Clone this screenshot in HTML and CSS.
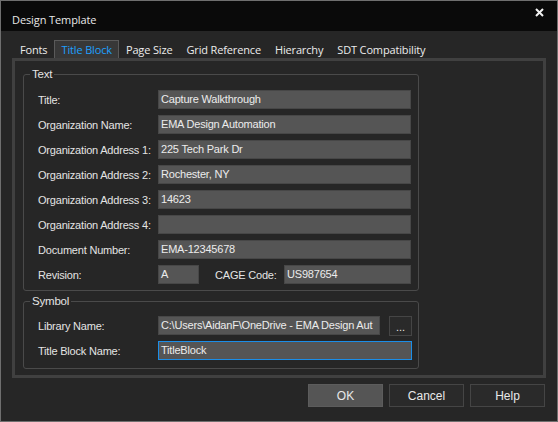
FILE: index.html
```html
<!DOCTYPE html>
<html>
  <head>
    <title>Design Template</title>
    <link rel="stylesheet" href="styles.css">
  </head>
  <body>
    <div class="window">
      <div class="titlebar">
        <span class="title">Design Template</span>
        <svg class="close" width="9" height="9" viewBox="0 0 9 9">
          <path d="M1 1 L8 8 M8 1 L1 8" stroke="#f2f2f2" stroke-width="2" />
        </svg>
      </div>

      <div class="tabs">
        <span class="tab">Fonts</span>
        <span class="tab active">Title Block</span>
        <span class="tab">Page Size</span>
        <span class="tab">Grid Reference</span>
        <span class="tab">Hierarchy</span>
        <span class="tab">SDT Compatibility</span>
      </div>

      <div class="tab-page">
        <fieldset class="group">
          <legend>Text</legend>
          <div class="form">
            <label>Title:</label>
            <div class="field">Capture Walkthrough</div>
            <label>Organization Name:</label>
            <div class="field">EMA Design Automation</div>
            <label>Organization Address 1:</label>
            <div class="field">225 Tech Park Dr</div>
            <label>Organization Address 2:</label>
            <div class="field">Rochester, NY</div>
            <label>Organization Address 3:</label>
            <div class="field">14623</div>
            <label>Organization Address 4:</label>
            <div class="field"></div>
            <label>Document Number:</label>
            <div class="field">EMA-12345678</div>
            <label>Revision:</label>
            <div class="field-row">
              <div class="field revision">A</div>
              <label class="cage-label">CAGE Code:</label>
              <div class="field cage">US987654</div>
            </div>
          </div>
        </fieldset>

        <fieldset class="group symbol">
          <legend>Symbol</legend>
          <div class="form">
            <label>Library Name:</label>
            <div class="field-row">
              <div class="field library">C:\Users\AidanF\OneDrive - EMA Design Aut</div>
              <button class="browse">...</button>
            </div>
            <label>Title Block Name:</label>
            <div class="field focused">TitleBlock</div>
          </div>
        </fieldset>
      </div>

      <div class="buttons">
        <button class="btn default">OK</button>
        <button class="btn">Cancel</button>
        <button class="btn">Help</button>
      </div>
    </div>
  </body>
</html>
```

FILE: styles.css
```css
body {
  margin: 0;
  background: #262626;
}
.window {
  width: 558px;
  height: 422px;
  box-sizing: border-box;
  border: 1px solid #6f6f6f;
  background: #262626;
  color: #e4e4e4;
  font-family: "Liberation Sans", Arial, sans-serif;
  font-size: 11px;
  letter-spacing: -0.2px;
}
.titlebar {
  height: 30px;
  background: #0a0a0a;
  display: flex;
  justify-content: space-between;
  align-items: flex-start;
  padding: 0 13px 0 11px;
}
.title {
  font-family: "Open Sans", sans-serif;
  font-size: 11px;
  letter-spacing: -0.1px;
  color: #e8e8e8;
  margin-top: 11px;
}
.close {
  margin-top: 7px;
}
.tabs {
  display: flex;
  margin: 9px 0 0 12px;
  height: 18px;
}
.tab {
  font-family: "Open Sans", sans-serif;
  font-size: 11px;
  letter-spacing: -0.15px;
  line-height: 17px;
  padding: 0 6px;
  border: 1px solid transparent;
  border-bottom: none;
  color: #ececec;
}
.tab.active {
  background: #383838;
  border-color: #5a5a5a;
  color: #1ea0ff;
}
.tab-page {
  margin-left: 11px;
  width: 534px;
  height: 320px;
  box-sizing: border-box;
  border: 3px solid #404040;
  padding: 6px 0 0 8px;
}
.group {
  width: 396px;
  box-sizing: border-box;
  margin: 0;
  padding: 0;
  border: 1px solid #4a4a4a;
  border-radius: 3px;
  min-width: 0;
}
.group.symbol {
  margin-top: 3px;
}
.group legend {
  margin-left: 6px;
  padding: 0 2px;
  line-height: 14px;
  font-size: 11.5px;
  color: #e4e4e4;
}
.form {
  display: grid;
  grid-template-columns: 120px 1fr;
  grid-auto-rows: 19px;
  row-gap: 6px;
  align-items: center;
  padding: 9px 7px 6px 14px;
}
.symbol .form {
  padding: 8px 7px 8px 14px;
}
.form label {
  font-size: 11px;
  white-space: nowrap;
}
.field {
  height: 19px;
  box-sizing: border-box;
  background: #555555;
  border: 1px solid #474747;
  padding: 0 2px;
  line-height: 17px;
  font-size: 11px;
  color: #ececec;
  white-space: nowrap;
  overflow: hidden;
}
.field.focused {
  border-color: #1b8ee8;
}
.field-row {
  display: flex;
  align-items: center;
  height: 19px;
}
.revision {
  width: 41px;
}
.cage-label {
  margin-left: 16px;
  width: 69px;
}
.cage {
  flex: 1;
}
.library {
  width: 222px;
}
.browse {
  margin-left: 9px;
  width: 23px;
  height: 20px;
  padding: 0;
  background: #2a2a2a;
  border: 1px solid #454545;
  color: #e4e4e4;
  font-family: "Liberation Sans", Arial, sans-serif;
  font-size: 11px;
  line-height: 20px;
}
.buttons {
  display: flex;
  justify-content: flex-end;
  gap: 6px;
  margin-top: 6px;
  padding-right: 12px;
}
.btn {
  width: 75px;
  height: 23px;
  padding: 0;
  background: #2a2a2a;
  border: 1px solid #454545;
  color: #e8e8e8;
  font-family: "Liberation Sans", Arial, sans-serif;
  font-size: 12px;
}
.btn.default {
  background: #555555;
  border-color: #5c5c5c;
}
```
